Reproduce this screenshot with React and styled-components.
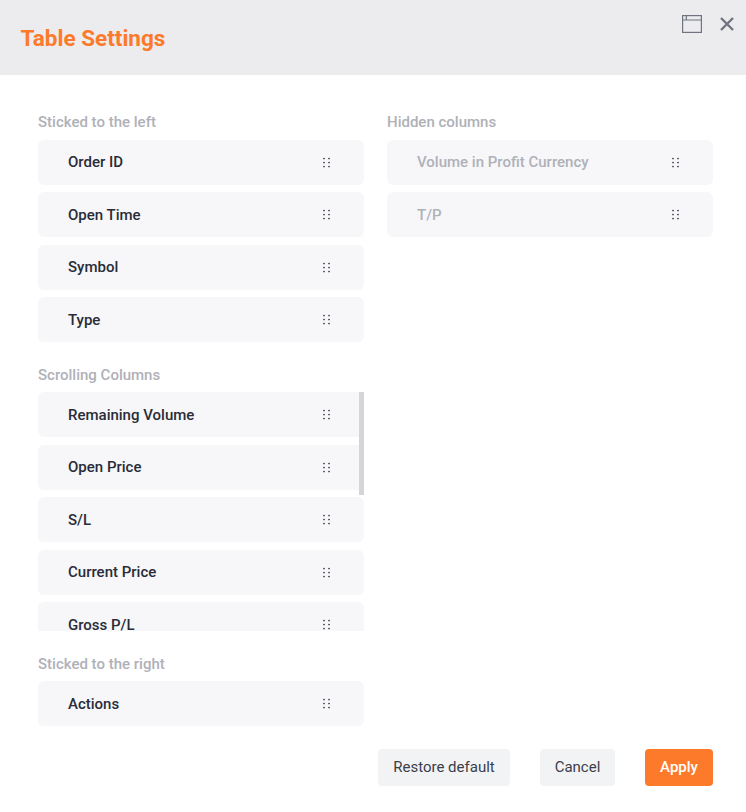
import React from "react";
import styled, { createGlobalStyle } from "styled-components";

const Global = createGlobalStyle`
  html, body { margin: 0; padding: 0; background: #fff; }
  body { font-family: Roboto, "Liberation Sans", sans-serif; }
  * { box-sizing: border-box; }
`;

const Modal = styled.div`
  width: 746px;
  height: 812px;
  display: flex;
  flex-direction: column;
  background: #fff;
  overflow: hidden;
`;

const Header = styled.header`
  height: 75px;
  flex: none;
  background: #ececee;
  display: flex;
  align-items: flex-start;
  justify-content: space-between;
  padding: 24px 11px 0 20.5px;
`;

const Title = styled.h1`
  margin: 0;
  font-size: 22.5px;
  line-height: 28px;
  font-weight: 700;
  color: #fd7a2a;
`;

const HeaderIcons = styled.div`
  display: flex;
  align-items: center;
  gap: 17px;
  margin-top: -9px;
`;

const IconButton = styled.button`
  padding: 0;
  border: 0;
  background: none;
  display: flex;
  color: #6f7480;
`;

const Body = styled.div`
  flex: 1;
  display: grid;
  grid-template-columns: 326px 326px;
  column-gap: 23px;
  padding: 37px 33px 0 38px;
  align-items: start;
`;

const Column = styled.div`
  display: flex;
  flex-direction: column;
  gap: 22.5px;
`;

const Section = styled.section`
  display: flex;
  flex-direction: column;
  gap: 7.5px;
`;

const Label = styled.h2`
  margin: 0;
  font-size: 15px;
  line-height: 20px;
  font-weight: 500;
  color: #afb1b8;
`;

const List = styled.div`
  display: flex;
  flex-direction: column;
  gap: 7.5px;
`;

const ScrollWrap = styled.div`
  position: relative;
  height: 239px;
  overflow: hidden;
`;

const ScrollThumb = styled.div`
  position: absolute;
  top: 0;
  right: 0;
  width: 5px;
  height: 103px;
  background: #d4d5d8;
`;

const Row = styled.div`
  flex: none;
  height: 45px;
  display: flex;
  align-items: center;
  justify-content: space-between;
  padding: 0 34px 0 30px;
  border-radius: 6px;
  background: #f7f7f9;
  font-size: 15px;
  font-weight: 500;
  color: ${(p) => (p.$muted ? "#afb1b8" : "#292c38")};
`;

const Footer = styled.footer`
  flex: none;
  height: 63px;
  display: flex;
  justify-content: flex-end;
  align-items: flex-start;
  padding-right: 33px;
`;

const Button = styled.button`
  height: 37px;
  width: ${(p) => p.$width}px;
  margin-left: ${(p) => p.$gap || 0}px;
  padding: 0 0 2px;
  border: 0;
  border-radius: 4px;
  font: ${(p) => (p.$primary ? 500 : 400)} 15px Roboto, sans-serif;
  background: ${(p) => (p.$primary ? "#fd7a2a" : "#f2f3f4")};
  color: ${(p) => (p.$primary ? "#fff" : "#3b3e4b")};
`;

const Grip = () => (
  <svg width="7" height="11" viewBox="0 0 7 11" fill="#30333e" aria-hidden="true">
    {[1.5, 5.5, 9.5].flatMap((y) =>
      [1, 6].map((x) => <circle key={`${x}-${y}`} cx={x} cy={y} r="0.85" />)
    )}
  </svg>
);

const Item = ({ name, muted }) => (
  <Row $muted={muted}>
    <span>{name}</span>
    <Grip />
  </Row>
);

const WindowIcon = () => (
  <svg width="20" height="18" viewBox="0 0 20 18" fill="none" stroke="currentColor" strokeWidth="1.2">
    <rect x="0.6" y="0.6" width="18.8" height="16.8" />
    <path d="M0.6 5H19.4M4.3 0.6V5" />
  </svg>
);

const CloseIcon = () => (
  <svg width="16" height="16" viewBox="0 0 16 16" fill="none" stroke="currentColor" strokeWidth="2.4">
    <path d="M2 2L14 14M14 2L2 14" />
  </svg>
);

export default function App() {
  return (
    <Modal>
      <Global />
      <Header>
        <Title>Table Settings</Title>
        <HeaderIcons>
          <IconButton><WindowIcon /></IconButton>
          <IconButton><CloseIcon /></IconButton>
        </HeaderIcons>
      </Header>
      <Body>
        <Column>
          <Section>
            <Label>Sticked to the left</Label>
            <List>
              {["Order ID", "Open Time", "Symbol", "Type"].map((n) => <Item key={n} name={n} />)}
            </List>
          </Section>
          <Section>
            <Label>Scrolling Columns</Label>
            <ScrollWrap>
              <List>
                {["Remaining Volume", "Open Price", "S/L", "Current Price", "Gross P/L"].map((n) => <Item key={n} name={n} />)}
              </List>
              <ScrollThumb />
            </ScrollWrap>
          </Section>
          <Section>
            <Label>Sticked to the right</Label>
            <List>
              <Item name="Actions" />
            </List>
          </Section>
        </Column>
        <Column>
          <Section>
            <Label>Hidden columns</Label>
            <List>
              <Item name="Volume in Profit Currency" muted />
              <Item name="T/P" muted />
            </List>
          </Section>
        </Column>
      </Body>
      <Footer>
        <Button $width={132}>Restore default</Button>
        <Button $width={75} $gap={30}>Cancel</Button>
        <Button $width={68} $gap={30} $primary>Apply</Button>
      </Footer>
    </Modal>
  );
}
